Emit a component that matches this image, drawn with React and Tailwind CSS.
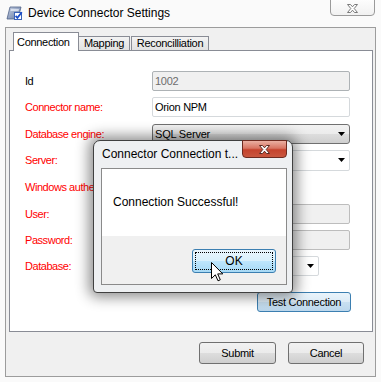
import React from "react";

function Arrow() {
  return (
    <svg width="7" height="4" viewBox="0 0 7 4">
      <polygon points="0,0 7,0 3.5,4" fill="#000" />
    </svg>
  );
}

function XGlyph({ fill, stroke }) {
  return (
    <svg width="13" height="11" viewBox="0 0 13 11">
      <path
        d="M1.5,1.5 L4.5,1.5 L6.5,3.8 L8.5,1.5 L11.5,1.5 L8.2,5.5 L11.5,9.5 L8.5,9.5 L6.5,7.2 L4.5,9.5 L1.5,9.5 L4.8,5.5 Z"
        fill={fill}
        stroke={stroke}
        strokeWidth="1"
        strokeLinejoin="round"
      />
    </svg>
  );
}

function AppIcon() {
  return (
    <svg width="17" height="17" viewBox="0 0 17 17">
      <defs>
        <linearGradient id="ig" x1="0" y1="0" x2="1" y2="1">
          <stop offset="0" stopColor="#c9d3e6" />
          <stop offset="1" stopColor="#5f759f" />
        </linearGradient>
      </defs>
      <path d="M4,3 L15,3 L12,15 L1,15 Z" fill="url(#ig)" stroke="#4d5f86" strokeWidth="0.8" />
      <path d="M5,5 L13,5 L12.5,7 L4.5,7 Z" fill="#eef2fa" opacity="0.7" />
      <rect x="8.5" y="8.5" width="7" height="7" fill="#ffffff" stroke="#3a62b8" strokeWidth="1" />
      <path d="M9.6,11.8 L11.4,13.8 L15.8,8.2" fill="none" stroke="#1d4fc9" strokeWidth="1.8" />
    </svg>
  );
}

function Cursor() {
  return (
    <svg width="13" height="20" viewBox="0 0 13 20">
      <path
        d="M0.5,0.5 L0.5,16.5 L4.3,12.8 L7,18.8 L9.3,17.8 L6.7,11.9 L11.8,11.9 Z"
        fill="#fff"
        stroke="#000"
        strokeWidth="1"
        strokeLinejoin="miter"
      />
    </svg>
  );
}

function Row({ label, red, mt, children }) {
  return (
    <div className={`flex items-center h-[20px] ${mt}`}>
      <div
        className={`w-[127px] text-[11px] leading-[13px] tracking-[-0.45px] whitespace-nowrap ${
          red ? "text-[#ff0000]" : "text-black"
        }`}
      >
        {label}
      </div>
      {children}
    </div>
  );
}

export default function App() {
  const grayBtn =
    "bg-[linear-gradient(#f2f2f2_0%,#ebebeb_50%,#dddddd_51%,#cfcfcf_100%)] border border-[#707070] rounded-[3px]";
  return (
    <div className="w-[381px] h-[382px] overflow-hidden bg-[#fafafa] relative font-['Liberation_Sans',Arial,sans-serif] text-black">
      {/* Title bar */}
      <div className="h-[27px] flex items-start">
        <div className="mt-[4px] ml-[6px]">
          <AppIcon />
        </div>
        <div className="ml-[5px] mt-[6px] text-[12px] leading-[15px] whitespace-nowrap">
          Device Connector Settings
        </div>
        <div className="ml-auto mr-[6px] -mt-[4px] w-[45px] h-[20px] rounded-[4px] border border-[#9a9a9a] bg-[linear-gradient(#ffffff,#f1f1f1)] flex items-center justify-center pt-[4px]">
          <XGlyph fill="#ffffff" stroke="#7a7a7a" />
        </div>
      </div>

      {/* Client area */}
      <div className="ml-[5px] w-[371px] h-[350px] bg-[#f0f0f0] border border-[#9c9c9c]">
        <div className="ml-[3px] mt-[4px]">
          {/* Tabs */}
          <div className="flex items-end h-[18px] pl-[4px] text-[11px] tracking-[-0.3px]">
            <div className="relative z-10 -mb-[1px] w-[66px] h-[19px] bg-white border border-b-0 border-[#898c95] flex items-center pl-[3px] leading-[13px]">
              Connection
            </div>
            <div className="-ml-[1px] w-[52px] h-[14px] bg-[linear-gradient(#f3f3f3,#e2e2e2)] border border-b-0 border-[#898c95] flex items-center justify-center leading-[13px]">
              Mapping
            </div>
            <div className="ml-[1px] w-[78px] h-[14px] bg-[linear-gradient(#f3f3f3,#e2e2e2)] border border-b-0 border-[#898c95] flex items-center justify-center leading-[13px]">
              Reconcilliation
            </div>
          </div>
          {/* Panel */}
          <div className="w-[364px] h-[282px] bg-white border border-[#898c95] pl-[15px] pt-[20px]">
            <Row label="Id" mt="mt-0">
              <div className="w-[198px] h-[20px] bg-[#f0f0f0] border border-[#adb2b5] rounded-[2px] flex items-center pl-[2px] text-[11px] tracking-[-0.3px] text-[#6d6d6d]">
                1002
              </div>
            </Row>
            <Row label="Connector name:" red mt="mt-[6px]">
              <div className="w-[198px] h-[20px] bg-white border border-[#d5d9dc] rounded-[2px] flex items-center pl-[2px] text-[11px] tracking-[-0.3px]">
                Orion NPM
              </div>
            </Row>
            <Row label="Database engine:" red mt="mt-[7px]">
              <div className={`w-[198px] h-[20px] ${grayBtn} rounded-[2px] flex items-center pl-[2px] pr-[4px] text-[11px] tracking-[-0.2px]`}>
                <span>SQL Server</span>
                <span className="ml-auto flex">
                  <Arrow />
                </span>
              </div>
            </Row>
            <Row label="Server:" red mt="mt-[6px]">
              <div className="w-[198px] h-[21px] bg-white border border-[#d5d9dc] rounded-[2px] flex items-center pr-[4px]">
                <span className="ml-auto flex">
                  <Arrow />
                </span>
              </div>
            </Row>
            <Row label="Windows authentication:" red mt="mt-[7px]">
              <div className="w-[13px] h-[13px] border border-[#8f8f8f] bg-white" />
            </Row>
            <Row label="User:" red mt="mt-[7px]">
              <div className="w-[198px] h-[20px] bg-[#f0f0f0] border border-[#bdbdbd] rounded-[2px]" />
            </Row>
            <Row label="Password:" red mt="mt-[6px]">
              <div className="w-[198px] h-[20px] bg-[#f0f0f0] border border-[#bdbdbd] rounded-[2px]" />
            </Row>
            <Row label="Database:" red mt="mt-[6px]">
              <div className="w-[167px] h-[20px] bg-white border border-[#d5d9dc] rounded-[2px] flex items-center pr-[4px]">
                <span className="ml-auto flex">
                  <Arrow />
                </span>
              </div>
            </Row>
            <div className="mt-[16px] ml-[232px] w-[94px] h-[20px] rounded-[3px] border border-[#3c7fb1] bg-[linear-gradient(#eaf4fb_0%,#dcebf6_50%,#c9e0f1_51%,#bcd7ec_100%)] flex items-center justify-center text-[11px] tracking-[-0.3px]">
              Test Connection
            </div>
          </div>
          {/* Bottom buttons */}
        </div>
        <div className="mt-[10px] ml-[193px] flex">
          <div className={`w-[77px] h-[22px] ${grayBtn} flex items-center justify-center text-[11px] tracking-[-0.3px]`}>
            Submit
          </div>
          <div className={`ml-[12px] w-[76px] h-[22px] ${grayBtn} flex items-center justify-center text-[11px] tracking-[-0.3px]`}>
            Cancel
          </div>
        </div>
      </div>

      {/* Message box overlay */}
      <div className="absolute left-[93px] top-[140px] w-[200px] h-[153px] rounded-t-[7px] rounded-b-[4px] border border-[#404040] bg-[#eef0f2] shadow-[0_0_14px_4px_rgba(0,0,0,0.45)]">
        <div className="flex items-start h-[27px]">
          <div className="ml-[8px] mt-[6px] text-[12px] leading-[15px] whitespace-nowrap">
            Connector Connection t...
          </div>
          <div className="ml-auto mr-[5px] -mt-[1px] w-[45px] h-[18px] rounded-b-[4px] border border-[#6d2a1f] bg-[linear-gradient(#eab0a2_0%,#d87563_45%,#c5432d_55%,#c9573f_100%)] flex items-center justify-center">
            <XGlyph fill="#ffffff" stroke="#5a2a22" />
          </div>
        </div>
        <div className="ml-[7px] w-[186px] h-[117px] border border-[#8a8a8a] flex flex-col">
          <div className="h-[67px] bg-white flex items-center pl-[11px] text-[12px] leading-[15px]">
            Connection Successful!
          </div>
          <div className="flex-1 bg-[#f0f0f0]">
            <div className="mt-[13px] ml-[90px] w-[84px] h-[24px] rounded-[3px] border border-[#3c7fb1] bg-[linear-gradient(#eaf6fd_0%,#d9f0fc_50%,#bee6fd_51%,#a7d9f5_100%)] p-[2px]">
              <div className="w-full h-full border border-dotted border-black flex items-center justify-center text-[12px]">
                OK
              </div>
            </div>
          </div>
        </div>
      </div>

      {/* Mouse pointer */}
      <div className="absolute left-[211px] top-[262px]">
        <Cursor />
      </div>
    </div>
  );
}
